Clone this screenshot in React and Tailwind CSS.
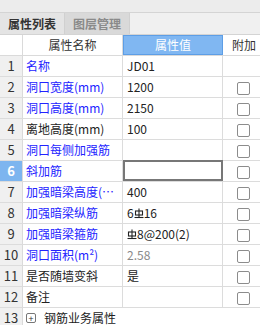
import React from "react";

const rows = [
  { no: 1, name: "名称", blue: true, value: "JD01", check: false },
  { no: 2, name: "洞口宽度(mm)", blue: true, value: "1200", check: true },
  { no: 3, name: "洞口高度(mm)", blue: true, value: "2150", check: true },
  { no: 4, name: "离地高度(mm)", blue: false, value: "100", check: true },
  { no: 5, name: "洞口每侧加强筋", blue: true, value: "", check: true },
  { no: 6, name: "斜加筋", blue: true, value: "", check: true, active: true },
  { no: 7, name: "加强暗梁高度(mm)", blue: true, value: "400", check: true },
  { no: 8, name: "加强暗梁纵筋", blue: true, value: "bar8", check: true },
  { no: 9, name: "加强暗梁箍筋", blue: true, value: "bar9", check: true },
  { no: 10, name: "洞口面积(m²)", blue: true, value: "2.58", check: true, gray: true },
  { no: 11, name: "是否随墙变斜", blue: false, value: "是", check: true },
  { no: 12, name: "备注", blue: false, value: "", check: true },
];

function Bar() {
  // rebar grade symbol
  return (
    <svg width="10" height="11" viewBox="0 0 10 11" className="inline-block -mt-[3px] align-middle">
      <rect x="1.5" y="3" width="7" height="4" fill="none" stroke="#222" strokeWidth="1.1" />
      <line x1="5" y1="0.5" x2="5" y2="9.5" stroke="#222" strokeWidth="1.1" />
      <line x1="0.5" y1="9.5" x2="9.5" y2="9.5" stroke="#222" strokeWidth="1.1" />
    </svg>
  );
}

function Value({ row }) {
  if (row.value === "bar8")
    return (
      <span>
        6<Bar />16
      </span>
    );
  if (row.value === "bar9")
    return (
      <span>
        <Bar />8@200(2)
      </span>
    );
  return <span>{row.value}</span>;
}

export default function App() {
  return (
    <div
      className="w-[260px] h-[325px] overflow-hidden bg-white text-[12px] text-[#222]"
      style={{ fontFamily: '"Noto Sans CJK SC", "Noto Sans", sans-serif' }}
    >
      <div className="h-[13px] bg-[#ececec] border-b border-[#d4d4d4]" />
      <div className="h-[22px] flex bg-[#f0f0f0] border-b border-[#d4d4d4]">
        <div className="w-[65px] flex items-center justify-center bg-[#e4e4e4] border-r border-[#d0d0d0] font-bold text-[#333]">
          属性列表
        </div>
        <div className="w-[65px] flex items-center justify-center bg-[#d9d9d9] border-r border-[#d0d0d0] font-bold text-[#8a8a8a]">
          图层管理
        </div>
      </div>

      <div className="grid grid-cols-[23px_100px_100px_37px] h-[21px] border-b border-[#dadada]">
        <div className="border-r border-[#dadada]" />
        <div className="flex items-center justify-center border-r border-[#dadada] text-[#333]">属性名称</div>
        <div className="flex items-center justify-center bg-[#80b7f2] border border-[#5d9ee6] text-white">属性值</div>
        <div className="flex items-center pl-[9px] text-[#333] whitespace-nowrap overflow-hidden">附加</div>
      </div>

      {rows.map((row) => (
        <div key={row.no} className="grid grid-cols-[23px_100px_100px_37px] h-[21px] border-b border-[#dcdcdc]">
          <div
            className={
              row.active
                ? "flex items-center justify-center bg-[#7db5ef] border-r border-[#dadada] text-white font-bold text-[13px]"
                : "flex items-center justify-center bg-[#f0f0f0] border-r border-[#dadada] text-[#333] text-[13px]"
            }
          >
            {row.no}
          </div>
          <div
            className={
              "flex items-center pl-[3px] pr-[2px] border-r border-[#dcdcdc] overflow-hidden " +
              (row.blue ? "text-[#2323ff]" : "text-[#222]")
            }
          >
            <span className="whitespace-nowrap overflow-hidden text-ellipsis">{row.name}</span>
          </div>
          {row.active ? (
            <div className="border-2 border-[#777] -mt-[1px] h-[21px]" />
          ) : (
            <div
              className={
                "flex items-center pl-[4px] border-r border-[#dcdcdc] whitespace-nowrap " +
                (row.gray ? "text-[#8a8a8a]" : "text-[#222]")
              }
            >
              <Value row={row} />
            </div>
          )}
          <div className="flex items-center pl-[14px] pt-[2px]">
            {row.check && <div className="w-[13px] h-[13px] border border-[#8c8c8c] rounded-[2px] bg-white" />}
          </div>
        </div>
      ))}

      <div className="grid grid-cols-[23px_237px] h-[21px] border-b border-[#dcdcdc]">
        <div className="flex items-center justify-center bg-[#f0f0f0] border-r border-[#dadada] text-[#333] text-[13px]">
          13
        </div>
        <div className="flex items-center pl-[3px] gap-[8px]">
          <div className="w-[10px] h-[10px] border border-[#777] rounded-[2px] flex items-center justify-center text-[9px] leading-none text-[#333]">
            +
          </div>
          <span>钢筋业务属性</span>
        </div>
      </div>
    </div>
  );
}
